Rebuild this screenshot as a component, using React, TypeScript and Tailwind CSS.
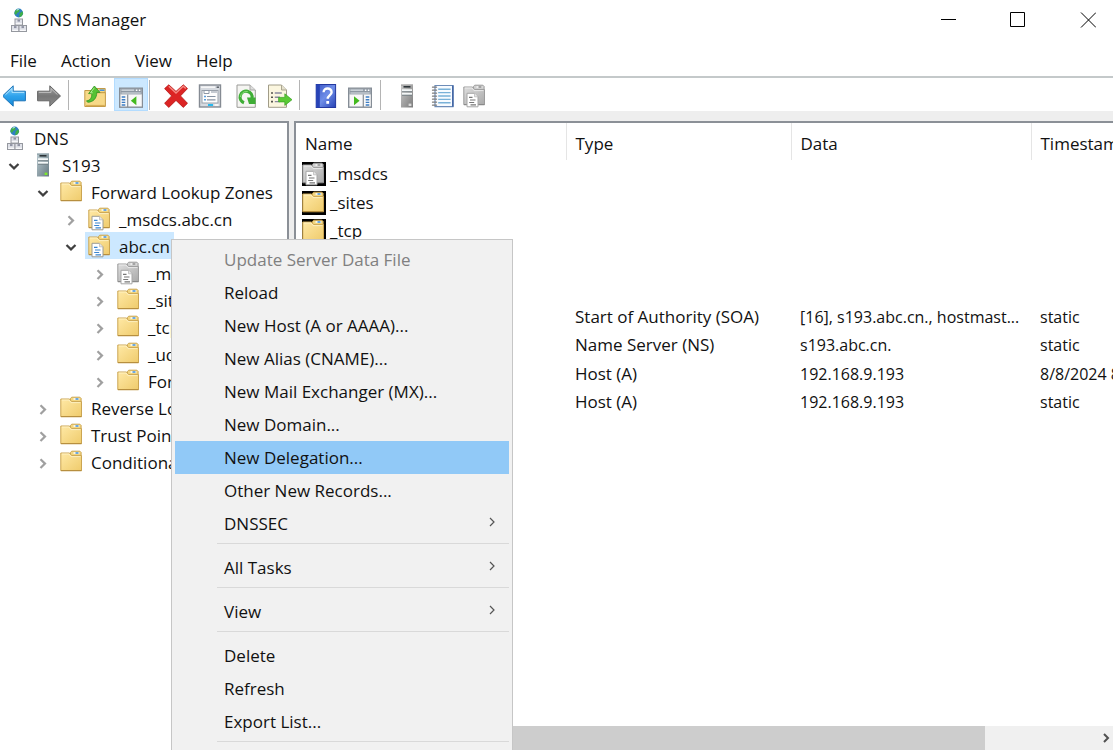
import { useState } from "react"
import type { ReactNode } from "react"
import clsx from "clsx"

type IconProps = { className?: string }

function Svg({ children, className }: { children: ReactNode; className?: string }) {
  return (
    <svg viewBox="0 0 24 24" className={clsx("h-6 w-6 shrink-0", className)} aria-hidden="true">
      {children}
    </svg>
  )
}

function DnsIcon() {
  return (
    <Svg>
      <circle cx="11.7" cy="5" r="4.4" fill="#2f7fc4" />
      <path d="M8.3 2.4 10.7 1l2 .8-.6 2.2-2 1-1 2-1.8-1.6zM12.7 5.2l2.6-2 .9 2.2-1.5 2.8-2.6 1z" fill="#3fae49" />
      <path d="M9.7 2.2l2-.8" stroke="#c8f0ff" strokeWidth="1" />
      {[
        [8, 11],
        [4.5, 17.5],
        [12, 17.5],
      ].map(([x, y]) => (
        <g key={`${x}-${y}`}>
          <rect x={x} y={y} width="7.5" height="6" fill="#dfe1e8" stroke="#95989f" strokeWidth="1" />
          <rect x={x + 2.5} y={y + 0.6} width="2.5" height="2" fill="#8f93a3" />
          <path d={`M${x + 0.8} ${y + 4.8}h6`} stroke="#fff" strokeWidth="1" />
        </g>
      ))}
    </Svg>
  )
}

function ServerIcon({ gray }: { gray?: boolean }) {
  return (
    <Svg>
      <defs>
        <linearGradient id={gray ? "srvG" : "srvB"} x1="0" y1="0" x2="1" y2="1">
          <stop offset="0" stopColor={gray ? "#c9c9c9" : "#b9c9cf"} />
          <stop offset="1" stopColor={gray ? "#7c7c7c" : "#667982"} />
        </linearGradient>
      </defs>
      <rect x="6" y="0.5" width="12" height="23" fill={`url(#${gray ? "srvG" : "srvB"})`} />
      <path d="M6 .5h12v1.4H6z" fill={gray ? "#a8a8a8" : "#94a5ac"} />
      <path d="M8.5 2.8h7" stroke="#2c3438" strokeWidth="1.6" />
      <path d="M7 6.2h10M7 9.8h10" stroke="#f4f7f8" strokeWidth="2" />
      <path d="M7 7.7h10M7 11.3h10" stroke="#6d7a80" strokeWidth="0.8" />
      <rect x="13.6" y="19.6" width="2.8" height="2.4" fill={gray ? "#d8d8d8" : "#7dea2a"} />
    </Svg>
  )
}

function FolderIcon({ gray, page, className }: IconProps & { gray?: boolean; page?: boolean }) {
  const id = gray ? "folderGray" : "folderYellow"
  const edge = gray ? "#9c9c9c" : "#cba552"
  return (
    <Svg className={className}>
      <defs>
        <linearGradient id={id} x1="0" y1="0" x2="1" y2="1">
          <stop offset="0" stopColor={gray ? "#dedede" : "#ffe9a6"} />
          <stop offset="1" stopColor={gray ? "#a9a9a9" : "#efcb6c"} />
        </linearGradient>
      </defs>
      <path d="M10.5 4.5V2.4l1.2-1.2h8.2l1.2 1.2v5H10.5z" fill={gray ? "#cfcfcf" : "#f3d67f"} stroke={edge} strokeWidth="1" />
      <path d="M13.5 3h5.8" stroke={gray ? "#f6f6f6" : "#fff"} strokeWidth="1.5" />
      <path d="M15.5 3h3" stroke={gray ? "#8d8d8d" : "#3f8fdf"} strokeWidth="1.5" />
      <path d="M.8 3h8.7l2.2 2.6h9.8v15.1H.8z" fill={`url(#${id})`} stroke={edge} strokeWidth="1" />
      <path d="M1.8 4h7.2l2.1 2.6h9.4" fill="none" stroke={gray ? "#f1f1f1" : "#fff5ce"} strokeWidth="0.8" />
      <path d="M1 20.6h20.5" stroke={gray ? "#888" : "#b48c3c"} strokeWidth="1" />
      {page && (
        <g>
          <path d="M4 9.3h7.5l3.5 3.5v10H4z" fill="#fff" stroke={gray ? "#a6a6a6" : "#9b9b93"} strokeWidth="1" />
          <path d="M11.5 9.3v3.5H15" fill="#e6e6e6" stroke="#b5b5b5" strokeWidth="0.7" />
          <path d="M6 13.3h3.5M7 16h5.5M6.2 18.5h5M7.5 20.8h5.5" stroke={gray ? "#777" : "#3a85d0"} strokeWidth="1.2" />
        </g>
      )}
    </Svg>
  )
}

function ArrowIcon({ forward }: { forward?: boolean }) {
  const id = forward ? "arrowFwd" : "arrowBack"
  return (
    <Svg>
      <defs>
        <linearGradient id={id} x1="0" y1="0" x2="0" y2="1">
          <stop offset="0" stopColor={forward ? "#a2a2a2" : "#8bd4fb"} />
          <stop offset="0.5" stopColor={forward ? "#777" : "#2fa3ec"} />
          <stop offset="1" stopColor={forward ? "#8c8c8c" : "#1687d6"} />
        </linearGradient>
      </defs>
      <path
        d={forward ? "M23.5 12 12.8 1.8v5.4H.6v9.6h12.2v5.4z" : "M-.5 12 10.2 1.8v5.4h12.2v9.6H10.2v5.4z"}
        fill={`url(#${id})`}
        stroke={forward ? "#666" : "#1c74b8"}
        strokeWidth="1"
        strokeLinejoin="round"
      />
      <path
        d={forward ? "M1.8 8.4H14V4.5l6.5 6.2" : "M21.2 8.4H9V4.5l-6.5 6.2"}
        fill="none"
        stroke={forward ? "#c4c4c4" : "#b9e6ff"}
        strokeWidth="0.9"
      />
    </Svg>
  )
}

function UpFolderIcon() {
  return (
    <Svg>
      <path d="M12.5 6V4.5h9.7V9h-9.7z" fill="#f3d67f" stroke="#c39b48" />
      <path d="M16.5 6.2h5" stroke="#3f8fdf" strokeWidth="1.5" />
      <path d="M1.8 6.5h9l2 2.2h9.6v13.8H1.8z" fill="#f7d988" stroke="#c39b48" />
      <path d="M2.8 21.5h19" stroke="#d9ae55" strokeWidth="1.2" />
      <path
        d="M3.5 16.8c3.8-.2 5.4-3 5.3-7.2H5.6L11.4 2l5.6 6.4h-3.2c0 6-3.6 9.8-9.2 9.8z"
        fill="#55c234"
        stroke="#2f9420"
        strokeWidth="0.8"
      />
      <path d="M11.4 3.8 7.5 8.8h2.2" fill="none" stroke="#b9f29c" strokeWidth="0.9" />
    </Svg>
  )
}

function ConsoleIcon({ right }: { right?: boolean }) {
  return (
    <Svg>
      <rect x="0.7" y="4.2" width="22.8" height="19" fill="#f8f8f8" stroke="#858d96" strokeWidth="1.4" />
      <path d="M1.4 5h21.4v5.4H1.4z" fill="#8d97a2" />
      <path d="M2.4 6.2h12.8M2.4 9h19.4" stroke="#dde3e8" strokeWidth="1.2" />
      <path d="M16.8 6.2h1.6M19.8 6.2h1.6" stroke="#fff" strokeWidth="1.4" />
      {right ? (
        <g>
          <path d="M15.3 10.5v12.4" stroke="#858d96" strokeWidth="1.2" />
          <path d="M17.7 13h3.6M17.7 15.7h3.6M17.7 18.4h3.6M17.7 21h3.6" stroke="#3b7cc4" strokeWidth="1.4" />
          <path d="m6 12.2 5.6 4.5L6 21.2z" fill="#43b91e" />
        </g>
      ) : (
        <g>
          <path d="M8.7 10.5v12.4" stroke="#858d96" strokeWidth="1.2" />
          <path d="M2.7 13h3.6M2.7 15.7h3.6M2.7 18.4h3.6M2.7 21h3.6" stroke="#3b7cc4" strokeWidth="1.4" />
          <path d="m17.4 12.2-5.6 4.5 5.6 4.5z" fill="#43b91e" />
        </g>
      )}
    </Svg>
  )
}

function DeleteIcon() {
  return (
    <Svg>
      <path
        d="M4.8.8 12 7.4 19.3.8l4.2 3.8-7 7.3 7 7.4-4.2 4.1L12 16.4l-7.2 7-4.2-4.1 7-7.4-7-7.3z"
        fill="#dc2424"
        stroke="#b51414"
        strokeWidth="0.8"
        strokeLinejoin="round"
      />
      <path d="M4.8 2.2 12 9l7.2-6.8 2.6 2.3" fill="none" stroke="#f58b84" strokeWidth="1.3" />
    </Svg>
  )
}

function PropertiesIcon() {
  return (
    <Svg>
      <rect x="1.5" y="1" width="21" height="22" fill="#d6dae0" stroke="#858b93" strokeWidth="1.4" />
      <path d="M3 3.2h14" stroke="#f8f8f8" strokeWidth="1.5" />
      <path d="M18.6 3.2h2.4" stroke="#5b6169" strokeWidth="1.5" />
      <rect x="4" y="6.5" width="16" height="12.5" fill="#fdfdfd" stroke="#9aa1aa" />
      <path d="M6 6.5h5v3H6zM13 8h6" fill="#fff" stroke="#8e98a6" />
      <path d="M6.2 12.5h1.6M6.2 15.8h1.6" stroke="#3286d4" strokeWidth="1.5" />
      <path d="M9 12.5h8.5M9 15.8h8.5" stroke="#8693a3" strokeWidth="1.2" />
      <path d="M10 21h5" stroke="#27b9ee" strokeWidth="2" />
      <path d="M16.5 21h4" stroke="#f6f6f6" strokeWidth="2" />
    </Svg>
  )
}

function RefreshIcon() {
  return (
    <Svg>
      <path d="M5 1h13l5.3 5v17.3H5z" fill="#f5f5f2" stroke="#9b9b98" />
      <path d="M18 1v5h5.3" fill="#ddd" stroke="#a9a9a6" />
      <path d="M12 18.8a6 6 0 1 1 8-4.5" fill="none" stroke="#3fae36" strokeWidth="3.2" />
      <path d="M15 13.4h8.6V20H17z" fill="#3fae36" />
      <path d="M8.4 13a6 6 0 0 1 7.4-5.4" fill="none" stroke="#8fe07e" strokeWidth="0.9" />
    </Svg>
  )
}

function ExportIcon() {
  return (
    <Svg className="overflow-visible">
      <path d="M2.5 1h13l5 5v17.3h-18z" fill="#fbf6df" stroke="#a19c88" />
      <path d="M15.5 1v5h5" fill="#e5e0cc" stroke="#aaa691" />
      <path d="M5 9h2M5 13.3h2M5 17.6h2" stroke="#55544d" strokeWidth="1.6" />
      <path d="M8.8 9h7M8.8 13.3h5M8.8 17.6h5" stroke="#8b8a9e" strokeWidth="1.4" />
      <path d="M12.6 13.4h6.2V9.8l7.2 5.9-7.2 5.7v-3.5h-6.2z" fill="#5bca35" stroke="#37a022" strokeWidth="0.7" />
    </Svg>
  )
}

function HelpIcon() {
  return (
    <Svg>
      <defs>
        <linearGradient id="helpBook" x1="0" y1="0" x2="1" y2="1">
          <stop offset="0" stopColor="#3a55c4" />
          <stop offset="0.5" stopColor="#6f8ee8" />
          <stop offset="1" stopColor="#2541b4" />
        </linearGradient>
      </defs>
      <rect x="2.2" y="0.5" width="19.4" height="23" fill="url(#helpBook)" stroke="#2338a0" />
      <path d="M2.2.5h3.6v23H2.2z" fill="#2743b6" />
      <path d="M9.6 8.2c0-5 8-4.9 8 0 0 3.2-3.9 3.3-3.9 6.6" fill="none" stroke="#fff" strokeWidth="2.4" />
      <rect x="12.3" y="17" width="2.8" height="2.8" fill="#fff" />
    </Svg>
  )
}

function NotebookIcon() {
  return (
    <Svg className="overflow-visible">
      <path d="M6 1.5h18v21.2H6z" fill="#f7fbff" stroke="#6d8cb8" strokeWidth="1.2" />
      <path d="M23.8 1.5v21.2" stroke="#4568a6" strokeWidth="1.6" />
      <path d="M9.2 5.2h12.4M9.2 8.6h12.4M9.2 12h12.4M9.2 15.4h12.4M9.2 18.8h12.4" stroke="#79b1d8" strokeWidth="1.4" />
      <path
        d="M3.5 3.2h4M3.5 6.2h4M3.5 9.2h4M3.5 12.2h4M3.5 15.2h4M3.5 18.2h4M3.5 21.2h4"
        stroke="#7c7c7c"
        strokeWidth="1.3"
        strokeLinecap="round"
      />
    </Svg>
  )
}

function Chevron({ open, className }: IconProps & { open?: boolean }) {
  return (
    <svg viewBox="0 0 12 12" className={clsx("h-3 w-3", className)} fill="none" aria-hidden="true">
      {open ? (
        <path d="m1.5 3 4.5 4.4L10.5 3" stroke="#404040" strokeWidth="2.2" />
      ) : (
        <path d="M3.5 1.2 8 5.6 3.5 10" stroke="#a0a0a0" strokeWidth="2.2" />
      )}
    </svg>
  )
}

function ToolButton({ label, active, children }: { label: string; active?: boolean; children: ReactNode }) {
  return (
    <button
      type="button"
      aria-label={label}
      aria-pressed={active}
      className={clsx(
        "flex h-[33px] shrink-0 items-center justify-center pt-[3px]",
        active ? "w-[34px] border border-[#b3dcff] bg-[#cce8ff]" : "w-[30px]",
      )}
    >
      {children}
    </button>
  )
}

function ToolSeparator({ className }: IconProps) {
  return <div className={clsx("h-[30px] w-px shrink-0 bg-[#b4b4b4]", className)} />
}

const indents = ["pl-[3px]", "pl-[3px]", "pl-[32px]", "pl-[60px]", "pl-[89px]"]

const treeItems: { label: string; depth: number; open?: boolean; icon: ReactNode }[] = [
  { label: "DNS", depth: 0, icon: <DnsIcon /> },
  { label: "S193", depth: 1, open: true, icon: <ServerIcon /> },
  { label: "Forward Lookup Zones", depth: 2, open: true, icon: <FolderIcon /> },
  { label: "_msdcs.abc.cn", depth: 3, icon: <FolderIcon page /> },
  { label: "abc.cn", depth: 3, open: true, icon: <FolderIcon page /> },
  { label: "_msdcs", depth: 4, icon: <FolderIcon page gray /> },
  { label: "_sites", depth: 4, icon: <FolderIcon /> },
  { label: "_tcp", depth: 4, icon: <FolderIcon /> },
  { label: "_udp", depth: 4, icon: <FolderIcon /> },
  { label: "ForestDnsZones", depth: 4, icon: <FolderIcon /> },
  { label: "Reverse Lookup Zones", depth: 2, icon: <FolderIcon /> },
  { label: "Trust Points", depth: 2, icon: <FolderIcon /> },
  { label: "Conditional Forwarders", depth: 2, icon: <FolderIcon /> },
]

const records = [
  { name: "_msdcs", gray: true },
  { name: "_sites" },
  { name: "_tcp" },
  { name: "_udp" },
  { name: "ForestDnsZones" },
  { name: "(same as parent)", type: "Start of Authority (SOA)", data: "[16], s193.abc.cn., hostmast...", time: "static" },
  { name: "(same as parent)", type: "Name Server (NS)", data: "s193.abc.cn.", time: "static" },
  { name: "(same as parent)", type: "Host (A)", data: "192.168.9.193", time: "8/8/2024 8:00:00 AM" },
  { name: "s193", type: "Host (A)", data: "192.168.9.193", time: "static" },
]

const menuGroups: { label: string; disabled?: boolean; sub?: boolean }[][] = [
  [
    { label: "Update Server Data File", disabled: true },
    { label: "Reload" },
    { label: "New Host (A or AAAA)..." },
    { label: "New Alias (CNAME)..." },
    { label: "New Mail Exchanger (MX)..." },
    { label: "New Domain..." },
    { label: "New Delegation..." },
    { label: "Other New Records..." },
    { label: "DNSSEC", sub: true },
  ],
  [{ label: "All Tasks", sub: true }],
  [{ label: "View", sub: true }],
  [{ label: "Delete" }, { label: "Refresh" }, { label: "Export List..." }],
  [{ label: "Properties" }],
]

function ContextMenu() {
  const [hovered, setHovered] = useState("New Delegation...")

  return (
    <div
      role="menu"
      className="absolute top-[239px] left-[171px] z-10 w-[342px] border border-[#c6c6c6] bg-[#f1f1f1] px-[3px] py-[3px]"
    >
      {menuGroups.map((group, i) => (
        <div key={i}>
          {i > 0 && (
            <div className="h-[11px] pt-[3px] pl-[42px]">
              <div className="h-px bg-[#d9d9d9]" />
            </div>
          )}
          {group.map((item) => (
            <button
              key={item.label}
              type="button"
              role="menuitem"
              disabled={item.disabled}
              onMouseEnter={() => setHovered(item.label)}
              className={clsx(
                "flex h-[33px] w-full items-center justify-between pt-px pr-3 pl-[49px] text-left",
                item.disabled && "text-[#808080]",
                hovered === item.label && "bg-[#91c9f7]",
              )}
            >
              {item.label}
              {item.sub && (
                <svg viewBox="0 0 10 10" className="mb-1 h-[10px] w-[10px]" fill="none" aria-hidden="true">
                  <path d="m3 1 4 4-4 4" stroke="#555" strokeWidth="1.2" />
                </svg>
              )}
            </button>
          ))}
        </div>
      ))}
    </div>
  )
}

export default function App() {
  const [selected, setSelected] = useState("abc.cn")

  return (
    <main className="relative flex h-screen flex-col overflow-hidden bg-white font-['Open_Sans','Noto_Sans',sans-serif] text-[17px] leading-6 whitespace-nowrap text-[#111]">
      {/* Title bar */}
      <header className="flex h-10 shrink-0 items-center justify-between pr-[10px] pl-[7px]">
        <div className="flex items-center gap-[6px]">
          <DnsIcon />
          <h1>DNS Manager</h1>
        </div>
        <div className="flex gap-10">
          <button type="button" aria-label="Minimize" className="flex h-[30px] w-[30px] items-center justify-center">
            <svg viewBox="0 0 16 16" className="h-4 w-4">
              <path d="M1 7.5h15" stroke="#000" />
            </svg>
          </button>
          <button type="button" aria-label="Maximize" className="flex h-[30px] w-[30px] items-center justify-center">
            <svg viewBox="0 0 16 16" className="h-4 w-4">
              <path d="M.5.5h14v14H.5z" fill="none" stroke="#000" />
            </svg>
          </button>
          <button type="button" aria-label="Close" className="flex h-[30px] w-[30px] items-center justify-center">
            <svg viewBox="0 0 16 16" className="h-4 w-4">
              <path d="m1 .5 15 15M16 .5l-15 15" stroke="#000" />
            </svg>
          </button>
        </div>
      </header>

      {/* Menu bar */}
      <nav className="flex h-[38px] shrink-0 items-center gap-6 border-b-2 border-[#c4c9ca] pt-[5px] pl-[10px]">
        {["File", "Action", "View", "Help"].map((label) => (
          <button key={label} type="button">
            {label}
          </button>
        ))}
      </nav>

      {/* Toolbar */}
      <div className="flex h-[33px] shrink-0 items-center">
        <div className="flex gap-1">
          <ToolButton label="Back"><ArrowIcon /></ToolButton>
          <ToolButton label="Forward"><ArrowIcon forward /></ToolButton>
        </div>
        <ToolSeparator className="mr-[11px] ml-1" />
        <div className="flex gap-1">
          <ToolButton label="Up one level"><UpFolderIcon /></ToolButton>
          <ToolButton label="Show console tree" active><ConsoleIcon /></ToolButton>
        </div>
        <ToolSeparator className="mr-[11px] ml-px" />
        <div className="flex gap-1">
          <ToolButton label="Delete"><DeleteIcon /></ToolButton>
          <ToolButton label="Properties"><PropertiesIcon /></ToolButton>
          <ToolButton label="Refresh"><RefreshIcon /></ToolButton>
          <ToolButton label="Export list"><ExportIcon /></ToolButton>
        </div>
        <ToolSeparator className="mr-[11px] ml-[6px]" />
        <div className="flex gap-1">
          <ToolButton label="Help"><HelpIcon /></ToolButton>
          <ToolButton label="Show action pane"><ConsoleIcon right /></ToolButton>
        </div>
        <ToolSeparator className="mr-[11px] ml-[5px]" />
        <div className="flex gap-1">
          <ToolButton label="New server"><ServerIcon gray /></ToolButton>
          <ToolButton label="New record"><NotebookIcon /></ToolButton>
          <ToolButton label="New zone"><FolderIcon gray page /></ToolButton>
        </div>
      </div>

      <div className="flex min-h-0 flex-1 gap-[5px] bg-[#eeeeee] pt-[10px]">
        {/* Console tree */}
        <aside className="w-[289px] shrink-0 overflow-hidden border-t-2 border-r-2 border-[#8b9097] bg-white pt-px">
          {treeItems.map((item) => (
            <div key={item.label} className={clsx("flex h-[27px]", indents[item.depth])}>
              {item.depth > 0 && (
                <button
                  type="button"
                  aria-label={`Toggle ${item.label}`}
                  aria-expanded={!!item.open}
                  className="mr-[3px] flex w-[22px] shrink-0 items-center justify-center pt-1"
                >
                  <Chevron open={item.open} />
                </button>
              )}
              <button
                type="button"
                onClick={() => setSelected(item.label)}
                className={clsx(
                  "flex items-center gap-[7px] pr-1",
                  item.depth > 0 && "pl-[3px]",
                  selected === item.label && "bg-[#cce8ff]",
                )}
              >
                {item.icon}
                <span className="pt-[3px]">{item.label}</span>
              </button>
            </div>
          ))}
        </aside>

        {/* Record list */}
        <section className="flex min-w-0 flex-1 flex-col overflow-hidden border-t-2 border-l-2 border-[#8b9097] bg-white">
          <div className="min-h-0 flex-1 overflow-hidden">
            <table className="w-[960px] table-fixed border-collapse text-left">
              <thead>
                <tr className="h-[37px]">
                  <th className="w-[270px] border-r border-[#e5e5e5] px-[9px] pt-1 font-normal">Name</th>
                  <th className="w-[225px] border-r border-[#e5e5e5] px-[9px] pt-1 font-normal">Type</th>
                  <th className="w-[240px] border-r border-[#e5e5e5] px-[9px] pt-1 font-normal">Data</th>
                  <th className="px-[9px] pt-1 font-normal">Timestamp</th>
                </tr>
              </thead>
              <tbody>
                {records.map((record, i) => (
                  <tr key={i} className="odd:h-[28px] even:h-[29px]">
                    <td className="py-0 pl-[6px]">
                      <div className="flex items-center gap-1">
                        <FolderIcon gray={record.gray} page={record.gray} className="bg-black" />
                        {record.name}
                      </div>
                    </td>
                    <td className="px-[9px] py-0">{record.type}</td>
                    <td className="px-[9px] py-0 text-base">{record.data}</td>
                    <td className="px-[9px] py-0 text-base">{record.time}</td>
                  </tr>
                ))}
              </tbody>
            </table>
          </div>
          {/* Horizontal scrollbar */}
          <div className="flex h-6 shrink-0 items-center justify-between bg-[#f0f0f0] pr-[2px]">
            <div className="h-full w-[689px] bg-[#cdcdcd]" />
            <svg viewBox="0 0 10 10" className="h-[10px] w-[10px]" fill="none" aria-hidden="true">
              <path d="m3 1 4 4-4 4" stroke="#505050" strokeWidth="2" />
            </svg>
          </div>
        </section>
      </div>

      <ContextMenu />
    </main>
  )
}
